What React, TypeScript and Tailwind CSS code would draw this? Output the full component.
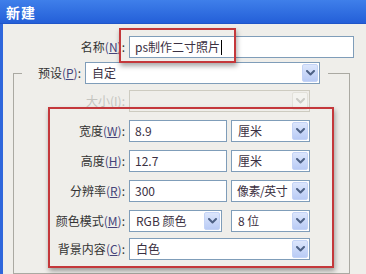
import type { ReactNode } from 'react'

function Chevron({ disabled }: { disabled?: boolean }) {
  return (
    <svg width="9" height="6" viewBox="0 0 9 6" fill="none">
      <path
        d="M1 1l3.5 3.5L8 1"
        stroke={disabled ? '#c9c9c4' : '#4d6185'}
        strokeWidth={2}
        strokeLinecap="round"
        strokeLinejoin="round"
      />
    </svg>
  )
}

function Label({ text, hotkey, width, disabled }: { text: string; hotkey: string; width: string; disabled?: boolean }) {
  return (
    <div className={`${width} shrink-0 text-right pr-[4px] whitespace-nowrap ${disabled ? 'text-[#c4c4bf]' : 'text-[#333333]'}`}>
      {text}
      <span className={disabled ? '' : 'text-[#45447a]'}>
        (<span className="underline">{hotkey}</span>)
      </span>
      :
    </div>
  )
}

function TextBox({ value, width, cursor }: { value: string; width: string; cursor?: boolean }) {
  return (
    <div className={`${width} h-[22px] shrink-0 border border-[#7f9db9] bg-white flex items-center pl-[5px] text-[#3b3042]`}>
      {value}
      {cursor && <span className="ml-[1px] w-px h-[15px] bg-black" />}
    </div>
  )
}

function Select({ value, width, disabled }: { value?: string; width: string; disabled?: boolean }) {
  return (
    <div
      className={`${width} h-[22px] shrink-0 border flex items-center pl-[6px] pr-[1px] ${
        disabled ? 'border-[#cdcbc0] bg-[#efeeea]' : 'border-[#7f9db9] bg-white'
      }`}
    >
      <span className="flex-1 min-w-0 whitespace-nowrap text-[#3b3042]">{value}</span>
      <div
        className={`w-[16px] h-[18px] shrink-0 rounded-[2px] border flex items-center justify-center ${
          disabled
            ? 'border-[#e2e1da] bg-[#f3f3ef]'
            : 'border-[#c3d3f6] bg-gradient-to-b from-[#dce6fc] to-[#b9cbf5]'
        }`}
      >
        <Chevron disabled={disabled} />
      </div>
    </div>
  )
}

function Row({ children, className }: { children: ReactNode; className?: string }) {
  return <div className={`flex items-center ${className ?? ''}`}>{children}</div>
}

export default function App() {
  return (
    <div className="relative w-[366px] h-[274px] overflow-hidden bg-[#efeeea] text-[12px] leading-[16px] font-['Noto_Sans_CJK_SC','Liberation_Sans',sans-serif]">
      {/* Title bar */}
      <div className="h-[24px] flex items-center pl-[6px] bg-gradient-to-b from-[#3f7fea] to-[#245fd8] border-b border-[#1f55c8]">
        <span className="text-white font-bold text-[14px] tracking-[1px]">新建</span>
      </div>

      <div className="flex h-[250px]">
        {/* window frame */}
        <div className="w-[3px] shrink-0 bg-[#2f67dc]" />

        <div className="flex-1 flex flex-col">
          <Row className="mt-[12px]">
            <Label text="名称" hotkey="N" width="w-[126px]" />
            <TextBox value="ps制作二寸照片" width="w-[225px]" cursor />
          </Row>

          <fieldset className="ml-[10px] mt-[4px] w-[337px] h-[230px] border border-[#aaa9a2] p-0 m-0">
            <legend className="ml-[8px] pr-[8px] p-0">
              <Row>
                <Label text="预设" hotkey="P" width="w-[63px]" />
                <Select value="自定" width="w-[235px]" />
              </Row>
            </legend>

            <div className="flex flex-col">
              <Row className="mt-[6px]">
                <Label text="大小" hotkey="I" width="w-[115px]" disabled />
                <Select width="w-[181px]" disabled />
              </Row>
              <Row className="mt-[8px]">
                <Label text="宽度" hotkey="W" width="w-[115px]" />
                <TextBox value="8.9" width="w-[98px]" />
                <div className="w-[4px]" />
                <Select value="厘米" width="w-[79px]" />
              </Row>
              <Row className="mt-[8px]">
                <Label text="高度" hotkey="H" width="w-[115px]" />
                <TextBox value="12.7" width="w-[98px]" />
                <div className="w-[4px]" />
                <Select value="厘米" width="w-[79px]" />
              </Row>
              <Row className="mt-[8px]">
                <Label text="分辨率" hotkey="R" width="w-[115px]" />
                <TextBox value="300" width="w-[98px]" />
                <div className="w-[4px]" />
                <div className="w-[79px] h-[22px] shrink-0 border border-[#7f9db9] bg-white flex items-center pl-[5px] pr-[1px]">
                  <span className="flex-1 whitespace-nowrap tracking-[-0.5px] text-[#3b3042]">像素/英寸</span>
                  <div className="w-[16px] h-[18px] shrink-0 rounded-[2px] border border-[#c3d3f6] bg-gradient-to-b from-[#dce6fc] to-[#b9cbf5] flex items-center justify-center">
                    <Chevron />
                  </div>
                </div>
              </Row>
              <Row className="mt-[8px]">
                <Label text="颜色模式" hotkey="M" width="w-[115px]" />
                <Select value="RGB 颜色" width="w-[93px]" />
                <div className="w-[9px]" />
                <Select value="8 位" width="w-[79px]" />
              </Row>
              <Row className="mt-[6px]">
                <Label text="背景内容" hotkey="C" width="w-[115px]" />
                <Select value="白色" width="w-[181px]" />
              </Row>
            </div>
          </fieldset>
        </div>
      </div>

      {/* red annotation boxes */}
      <div className="absolute left-[119px] top-[28px] w-[117px] h-[35px] border-2 border-[#c4383b] shadow-[1px_3px_5px_rgba(0,0,0,0.35)]" />
      <div className="absolute left-[48px] top-[107px] w-[286px] h-[161px] border-2 border-[#c4383b] shadow-[1px_3px_5px_rgba(0,0,0,0.35)]" />
    </div>
  )
}
